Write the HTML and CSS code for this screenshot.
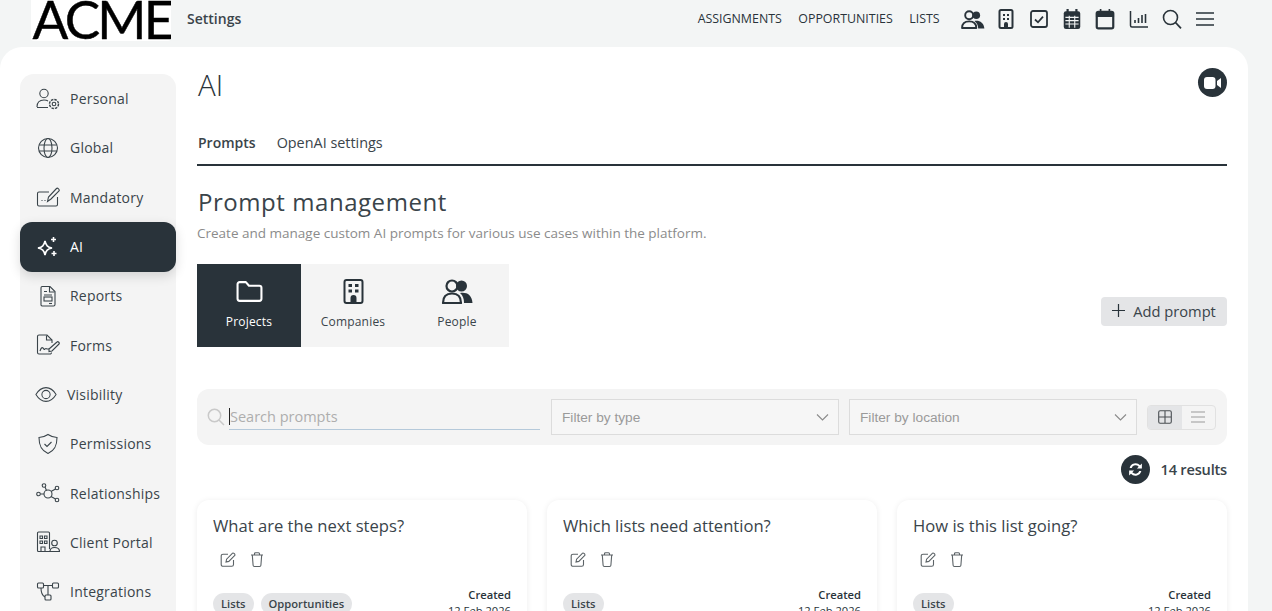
FILE: index.html
```html
<!DOCTYPE html>
<html lang="en">
<head>
<meta charset="utf-8">
<title>AI Settings</title>
<link rel="stylesheet" href="styles.css">
</head>
<body>
<header class="topbar">
  <div class="logo"><span class="logo-text">ACME</span></div>
  <div class="app-title">Settings</div>
  <nav class="topnav">
    <a>ASSIGNMENTS</a><a>OPPORTUNITIES</a><a>LISTS</a>
  </nav>
  <div class="topicons">
    <svg class="ti ti-people" viewBox="0 0 26 20"><circle cx="9.500" cy="5.500" r="4.200" fill="none" stroke="#29333a" stroke-width="2"/><circle cx="17" cy="5.500" r="4" fill="#29333a"/><path d="M2 19c0-5 3-7 7.500-7S17 14 17 19z" fill="none" stroke="#29333a" stroke-width="2" stroke-linejoin="round"/><path d="M15 11.500c5-1 10 1.500 10.500 8H19c0-3.500-1.500-6-4-8z" fill="#29333a"/></svg>
    <svg class="ti ti-narrow" viewBox="0 0 16 20"><rect x="1.500" y="1" width="13" height="18" rx="1.500" fill="none" stroke="#29333a" stroke-width="2"/><path d="M5 5h2v2H5zM9 5h2v2H9zM5 9h2v2H5zM9 9h2v2H9zM6 19v-4a2 2 0 0 1 4 0v4z" fill="#29333a"/></svg>
    <svg class="ti" viewBox="0 0 20 20"><rect x="2" y="2" width="16" height="16" rx="2" fill="none" stroke="#29333a" stroke-width="1.800"/><path d="M6 10.500l3 2.800 5-5.600" fill="none" stroke="#29333a" stroke-width="1.800"/></svg>
    <svg class="ti ti-cal" viewBox="0 0 20 20"><rect x="2.500" y="3" width="15" height="16" rx="2" fill="#29333a"/><path d="M6 1v4M14 1v4" stroke="#29333a" stroke-width="2"/><path d="M4 8.500h12M4 11.500h12M4 14.500h12M7.500 7v11M12.500 7v11" stroke="#f3f5f5" stroke-width="1"/></svg>
    <svg class="ti ti-cal" viewBox="0 0 20 20"><rect x="2.500" y="3.500" width="15" height="15" rx="1.500" fill="none" stroke="#29333a" stroke-width="2"/><path d="M2.500 5h15v2.500h-15zM6 1v3M14 1v3" fill="#29333a" stroke="#29333a" stroke-width="1.500"/></svg>
    <svg class="ti" viewBox="0 0 20 20"><path d="M1.500 2v14.500a1.500 1.500 0 0 0 1.500 1.500h16" fill="none" stroke="#29333a" stroke-width="1.500"/><path d="M6 11v3M9.500 9v5M13 6v8M16.500 5v9" stroke="#29333a" stroke-width="1.600"/></svg>
    <svg class="ti" viewBox="0 0 20 20"><circle cx="8.500" cy="8.500" r="7" fill="none" stroke="#29333a" stroke-width="1.600"/><path d="M13.500 13.500l5.500 5.800" stroke="#29333a" stroke-width="1.800"/></svg>
    <svg class="ti" viewBox="0 0 20 20"><path d="M1 4h18M1 10h18M1 16h18" stroke="#29333a" stroke-width="1.600"/></svg>
  </div>
</header>

<main class="panel">
  <aside class="sidebar">
    <a class="side-item"><svg class="si" viewBox="0 0 24 22"><circle cx="8" cy="5.500" r="4.200"/><path d="M1 19c0-5 3-7 7-7 1.500 0 3 .3 4 1M1 19.500h11"/><circle cx="18" cy="16" r="1.800"/><circle cx="18" cy="16" r="4.500" stroke-dasharray="2.500 1" stroke-width="1.400"/></svg><span>Personal</span></a>
    <a class="side-item"><svg class="si" viewBox="0 0 22 22"><circle cx="11" cy="11" r="9.500"/><ellipse cx="11" cy="11" rx="4" ry="9.500"/><path d="M2 8h18M2 14h18"/></svg><span>Global</span></a>
    <a class="side-item"><svg class="si" viewBox="0 0 24 22"><path d="M13 6H3a1.500 1.500 0 0 0-1.500 1.500v11A1.500 1.500 0 0 0 3 20h17a1.500 1.500 0 0 0 1.500-1.500V11"/><path d="M11.500 15.500l1-4.500 8-8.500c1-1 3.500 1 2.500 2.500l-8 8z"/><path d="M5.500 14.500h1M8.500 14.500h1"/></svg><span>Mandatory</span></a>
    <a class="side-item active"><svg class="si" viewBox="0 0 22 22"><path d="M8 5c1 4.500 2.500 6 7 7-4.500 1-6 2.500-7 7-1-4.500-2.500-6-7-7 4.500-1 6-2.500 7-7z" stroke-width="1.600"/><path d="M16.500 1v5M14 3.500h5M17 15v5M14.500 17.500h5" stroke-width="1.600"/></svg><span>AI</span></a>
    <a class="side-item"><svg class="si" viewBox="0 0 22 22"><path d="M5 1.500h8l5 5v13a1.500 1.500 0 0 1-1.500 1.500h-11A1.500 1.500 0 0 1 4 20V3a1.500 1.500 0 0 1 1-1.500z"/><path d="M12.500 2v5h5M7 6.500h3M7 10h8"/><rect x="7" y="12" width="8" height="4"/><path d="M12 18.500h3"/></svg><span>Reports</span></a>
    <a class="side-item"><svg class="si" viewBox="0 0 24 22"><path d="M16 9V6l-5-5H3a1.500 1.500 0 0 0-1.500 1.500v16A1.500 1.500 0 0 0 3 20h11a1.500 1.500 0 0 0 1.500-1.500"/><path d="M10.500 1.500V6H16M4 17c1-3 2-4 3-3s1 2 2 1 1-1 2 0h2"/><path d="M13 15l8-7c1-1 3 1 2 2l-7 7-3 .500z"/></svg><span>Forms</span></a>
    <a class="side-item item-eye"><svg class="si si-eye" viewBox="0 0 24 18"><path d="M1 9c3-5 7-7.500 11-7.500S20 4 23 9c-3 5-7 7.500-11 7.500S4 14 1 9z"/><circle cx="12" cy="9" r="4.500"/></svg><span>Visibility</span></a>
    <a class="side-item"><svg class="si" viewBox="0 0 22 22"><path d="M11 1.500c3 2 5 3 9 3 0 8-2 13-9 16-7-3-9-8-9-16 4 0 6-1 9-3z"/><path d="M7.500 11l2.500 2.500 4.500-4.500"/></svg><span>Permissions</span></a>
    <a class="side-item"><svg class="si" viewBox="0 0 24 22"><circle cx="12" cy="12" r="4"/><circle cx="8" cy="3.500" r="1.800"/><circle cx="2.500" cy="12" r="1.800"/><circle cx="21" cy="6" r="1.800"/><circle cx="21" cy="18" r="1.800"/><path d="M9 5l1.500 3.500M4.300 12H8M19.500 7l-4.500 2.500M19.500 17L15 14.500"/></svg><span>Relationships</span></a>
    <a class="side-item"><svg class="si" viewBox="0 0 24 22"><path d="M14 20.500H2.500A1 1 0 0 1 1.500 19.500V2A1 1 0 0 1 2.500 1h10A1 1 0 0 1 13.500 2v16"/><path d="M4 5h2.500v2.500H4zM8.500 5H11v2.500H8.500zM4 10h2.500v2.500H4zM8.500 10H11v2.500H8.500zM5 20v-4h4v4"/><circle cx="18.500" cy="12" r="2.800"/><path d="M14 20.500c0-3 1.500-4 4.500-4s5 1 5 4z"/></svg><span>Client Portal</span></a>
    <a class="side-item"><svg class="si" viewBox="0 0 24 22"><rect x="1.500" y="2" width="6" height="5" rx="1"/><rect x="16.500" y="2" width="6" height="5" rx="1"/><rect x="9" y="14" width="6" height="5" rx="1"/><path d="M7.500 4.500h9M5 7c0 5 2 8 4 9M12 4.500V14"/></svg><span>Integrations</span></a>
  </aside>

  <section class="content">
    <div class="title-row">
      <h1>AI</h1>
      <span class="round-btn"><svg viewBox="0 0 18 14" class="video"><rect x="0" y="1" width="11.500" height="12" rx="3" fill="#fff"/><path d="M13 5l4-3v10l-4-3z" fill="#fff"/></svg></span>
    </div>
    <div class="tabs"><a class="tab on">Prompts</a><a class="tab">OpenAI settings</a></div>
    <h2>Prompt management</h2>
    <p class="sub">Create and manage custom AI prompts for various use cases within the platform.</p>

    <div class="type-row">
      <div class="types">
        <div class="type sel"><svg viewBox="0 0 26 22" class="ty"><path d="M1.500 4a2 2 0 0 1 2-2h6l3 3.500h10a2 2 0 0 1 2 2V18a2 2 0 0 1-2 2h-19a2 2 0 0 1-2-2z" fill="none" stroke="#fff" stroke-width="2" stroke-linejoin="round"/></svg><span>Projects</span></div>
        <div class="type"><svg viewBox="0 0 20 25" class="ty"><rect x="1" y="1" width="18" height="23" rx="2" fill="none" stroke="#29333a" stroke-width="2"/><path d="M5 5h3.500v3H5zM11.500 5H15v3h-3.500zM5 10.500h3.500v3H5zM11.500 10.500H15v3h-3.500zM7 24v-5a3 3 0 0 1 6 0v5z" fill="#29333a"/></svg><span>Companies</span></div>
        <div class="type"><svg viewBox="0 0 32 25" class="ty ty-p"><circle cx="11" cy="7" r="5.500" fill="none" stroke="#29333a" stroke-width="2.200"/><circle cx="20.500" cy="7" r="5.500" fill="#29333a"/><path d="M2 24c0-7 3.500-9.500 9-9.500s9 2.500 9 9.500z" fill="none" stroke="#29333a" stroke-width="2.200" stroke-linejoin="round"/><path d="M19 14c7-1 12 2 12.500 10H23c0-4-1-7.500-4-10z" fill="#29333a"/></svg><span>People</span></div>
      </div>
      <button class="add"><svg viewBox="0 0 14 14" class="plus"><path d="M7 0v14M0 7h14" stroke="#29333a" stroke-width="1.300"/></svg>Add prompt</button>
    </div>

    <div class="filters">
      <svg viewBox="0 0 18 18" class="sicon"><circle cx="7.500" cy="7.500" r="6.200" fill="none" stroke="#c9c9c9" stroke-width="1.500"/><path d="M12 12l5 5" stroke="#c9c9c9" stroke-width="1.500"/></svg>
      <div class="search"><span class="caret"></span><span class="ph">Search prompts</span></div>
      <div class="select sel-a"><span>Filter by type</span><svg viewBox="0 0 12 7" class="chev"><path d="M.5.500l5.500 5.500L11.500.500" fill="none" stroke="#8a8a8a" stroke-width="1.100"/></svg></div>
      <div class="select sel-b"><span>Filter by location</span><svg viewBox="0 0 12 7" class="chev"><path d="M.5.500l5.500 5.500L11.500.500" fill="none" stroke="#8a8a8a" stroke-width="1.100"/></svg></div>
      <div class="toggle">
        <span class="tg on"><svg viewBox="0 0 14 14"><rect x=".7" y=".7" width="12.600" height="12.600" rx="1.500" fill="none" stroke="#4a4f53" stroke-width="1.100"/><path d="M7 1v12M1 7h12" stroke="#4a4f53" stroke-width="1.100"/></svg></span>
        <span class="tg"><svg viewBox="0 0 14 12"><path d="M0 1h14M0 6h14M0 11h14" stroke="#9a9a9a" stroke-width="1.100"/></svg></span>
      </div>
    </div>

    <div class="results">
      <span class="refresh"><svg viewBox="0 0 16 16"><path d="M2.500 6.500A5.700 5.700 0 0 1 12.300 4L14 2.300V7H9.300l1.700-1.700A3.900 3.900 0 0 0 4.400 6.500zM13.500 9.500A5.700 5.700 0 0 1 3.700 12L2 13.700V9h4.700L5 10.700a3.900 3.900 0 0 0 6.600-1.200z" fill="#fff"/></svg></span>
      <span class="count">14 results</span>
    </div>

    <div class="cards">
      <article class="card">
        <h3>What are the next steps?</h3>
        <div class="actions"><svg viewBox="0 0 16 16"><path d="M13.500 8.500V13a1.800 1.800 0 0 1-1.800 1.800H3A1.800 1.800 0 0 1 1.200 13V4.500A1.800 1.800 0 0 1 3 2.700h5"/><path d="M6 10.500l.600-2.800 6-6c.8-.8 3 1.400 2.200 2.200l-6 6z"/></svg><svg viewBox="0 0 16 16"><path d="M2 3.500h12M5.500 3.500V2.200a1 1 0 0 1 1-1h3a1 1 0 0 1 1 1v1.300M3.300 3.500l.8 10.300a1.300 1.300 0 0 0 1.300 1.200h5.200a1.300 1.300 0 0 0 1.300-1.200l.8-10.300"/></svg></div>
        <div class="meta"><div class="chips"><span class="chip">Lists</span><span class="chip">Opportunities</span></div><div class="created"><b>Created</b><span>12 Feb 2026</span></div></div>
      </article>
      <article class="card">
        <h3>Which lists need attention?</h3>
        <div class="actions"><svg viewBox="0 0 16 16"><path d="M13.500 8.500V13a1.800 1.800 0 0 1-1.800 1.800H3A1.800 1.800 0 0 1 1.200 13V4.500A1.800 1.800 0 0 1 3 2.700h5"/><path d="M6 10.500l.600-2.800 6-6c.8-.8 3 1.400 2.200 2.200l-6 6z"/></svg><svg viewBox="0 0 16 16"><path d="M2 3.500h12M5.500 3.500V2.200a1 1 0 0 1 1-1h3a1 1 0 0 1 1 1v1.300M3.300 3.500l.8 10.300a1.300 1.300 0 0 0 1.300 1.200h5.200a1.300 1.300 0 0 0 1.300-1.200l.8-10.300"/></svg></div>
        <div class="meta"><div class="chips"><span class="chip">Lists</span></div><div class="created"><b>Created</b><span>12 Feb 2026</span></div></div>
      </article>
      <article class="card">
        <h3>How is this list going?</h3>
        <div class="actions"><svg viewBox="0 0 16 16"><path d="M13.500 8.500V13a1.800 1.800 0 0 1-1.800 1.800H3A1.800 1.800 0 0 1 1.200 13V4.500A1.800 1.800 0 0 1 3 2.700h5"/><path d="M6 10.500l.600-2.800 6-6c.8-.8 3 1.400 2.200 2.200l-6 6z"/></svg><svg viewBox="0 0 16 16"><path d="M2 3.500h12M5.500 3.500V2.200a1 1 0 0 1 1-1h3a1 1 0 0 1 1 1v1.300M3.300 3.500l.8 10.300a1.300 1.300 0 0 0 1.300 1.200h5.200a1.300 1.300 0 0 0 1.300-1.200l.8-10.300"/></svg></div>
        <div class="meta"><div class="chips"><span class="chip">Lists</span></div><div class="created"><b>Created</b><span>12 Feb 2026</span></div></div>
      </article>
    </div>
  </section>
</main>
</body>
</html>
```
FILE: styles.css
```css
* { box-sizing: border-box; }
html, body { margin: 0; height: 100%; overflow: hidden; }
body { background: #f3f5f5; color: #29333a; font-family: "Open Sans", sans-serif; font-size: 14px; }
a { color: inherit; text-decoration: none; }
h1, h2, h3, p { margin: 0; font-weight: 400; }

.topbar { height: 47px; display: flex; align-items: flex-start; padding-left: 31px; padding-right: 50px; }
.logo { width: 140px; height: 41px; background: #fff; overflow: hidden; display: flex; justify-content: center; align-items: flex-start; border-bottom-left-radius: 3px; border-bottom-right-radius: 3px; }
.logo-text { font-family: "Lato", sans-serif; font-size: 53px; line-height: 38px; letter-spacing: -2.800px; color: #000; font-weight: 400; -webkit-text-stroke: .4px #000; margin-left: 2px; }
.app-title { margin-left: 16px; margin-top: 9px; font-size: 14px; line-height: 20px; font-weight: 600; color: #3a444a; }
.topnav { margin-left: auto; margin-top: 10px; display: flex; gap: 16.500px; font-size: 12.400px; line-height: 18px; color: #29333a; }
.topicons { margin-left: 16px; margin-top: 8px; display: grid; grid-template-columns: repeat(8, 33.300px); justify-items: center; align-items: center; height: 22px; }
.ti { width: 20px; height: 20px; display: block; }
.ti-people { width: 25px; height: 19px; }
.ti-narrow { width: 16px; height: 20px; }
.ti-cal { width: 22px; height: 22px; }

.panel { width: 1248px; height: 564px; background: #fff; border-radius: 22px 22px 0 0; display: flex; align-items: flex-start; padding: 27px 21px 0 20px; overflow: hidden; }
.sidebar { width: 156px; flex: none; background: #f4f4f4; border-radius: 14px; display: flex; flex-direction: column; height: 560px; }
.side-item { height: 49.300px; flex: none; display: flex; align-items: center; padding-left: 16px; gap: 10px; color: #3a444a; font-size: 14px; letter-spacing: .22px; }
.side-item.active { height: 50px; margin-bottom: -.7px; background: #29333a; color: #fff; border-radius: 12px; box-shadow: 0 4px 12px rgba(0,0,0,.14); }
.si { width: 24px; height: 22px; flex: none; fill: none; stroke: #3a444a; stroke-width: 1.100; }
.active .si { stroke: #fff; }
.item-eye { gap: 10px; padding-left: 15px; }
.si-eye { width: 22px; height: 17px; }

.content { margin-left: 21px; width: 1030px; flex: none; }
.title-row { display: flex; justify-content: space-between; height: 42px; }
h1 { font-size: 29.500px; line-height: 22px; font-weight: 300; color: #29333a; margin-left: 1px; }
.round-btn { width: 29px; height: 29px; border-radius: 50%; background: #29333a; display: flex; align-items: center; justify-content: center; margin-top: -6px; }
.video { width: 18px; height: 14px; }
.tabs { display: flex; gap: 21px; height: 50px; padding-top: 16px; border-bottom: 2px solid #29333a; line-height: 22px; }
.tab { color: #3a444a; font-size: 14.400px; }
.tab.on { font-weight: 600; margin-left: 1px; font-size: 14px; }
h2 { font-size: 24px; line-height: 32px; margin-top: 20px; letter-spacing: .55px; color: #3a444a; margin-left: 1px; }
.sub { font-size: 13.500px; line-height: 18px; margin-top: 6px; color: #8b8b8b; }

.type-row { display: flex; justify-content: space-between; align-items: flex-end; margin-top: 22px; height: 83px; }
.types { display: flex; background: #f4f4f4; height: 83px; }
.type { width: 104px; display: flex; flex-direction: column; align-items: center; font-size: 12px; color: #3a444a; padding-top: 15px; letter-spacing: .2px; }
.type span { margin-top: 10px; line-height: 16px; }
.type.sel { background: #29333a; color: #fff; }
.ty { height: 25px; width: 27px; display: block; }
.ty-p { width: 32px; }
.add { align-self: flex-end; margin-bottom: 21px; height: 29px; width: 126px; border: 0; border-radius: 4px; background: #e4e5e7; color: #3a444a; font-family: inherit; font-size: 14.700px; line-height: 20px; display: flex; align-items: center; justify-content: center; gap: 8px; padding: 0 0 2px; }
.plus { width: 13px; height: 13px; }

.filters { margin-top: 42px; height: 56px; background: #f4f4f4; border-radius: 12px; display: flex; align-items: center; padding: 0 11px 0 10px; }
.sicon { width: 18px; height: 18px; flex: none; margin-right: 4px; }
.search { width: 311px; height: 26px; border-bottom: 1px solid #b5c9da; display: flex; align-items: center; flex: none; }
.caret { width: 1px; height: 17px; background: #222; flex: none; }
.ph { color: #aeaeae; font-size: 14.500px; line-height: 20px; }
.select { height: 36px; background: #f6f6f6; border: 1px solid #dcdcdc; display: flex; align-items: center; justify-content: space-between; padding: 0 9px 0 10px; color: #9a9a9a; font-family: "Liberation Sans", sans-serif; font-size: 13.700px; flex: none; }
.sel-a { width: 288px; margin-left: 11px; }
.sel-b { width: 288px; margin-left: 10px; }
.chev { width: 13px; height: 7px; }
.toggle { margin-left: 10px; width: 69px; height: 25px; border: 1px solid #e1e1e1; border-radius: 4px; display: flex; overflow: hidden; flex: none; }
.tg { flex: 1; display: flex; align-items: center; justify-content: center; }
.tg.on { background: #e4e5e7; }
.tg svg { width: 14px; height: 14px; }

.results { display: flex; justify-content: flex-end; align-items: center; gap: 10px; height: 40px; margin-top: 5px; padding-bottom: 2px; }
.refresh { width: 29px; height: 29px; border-radius: 50%; background: #29333a; display: flex; align-items: center; justify-content: center; }
.refresh svg { width: 17px; height: 17px; }
.count { font-size: 14.600px; font-weight: 600; color: #3a444a; letter-spacing: -.2px; }

.cards { display: grid; grid-template-columns: repeat(3, 330px); gap: 20px; margin-top: 10px; }
.card { height: 160px; background: #fff; border-radius: 12px; box-shadow: 0 1px 6px rgba(0,0,0,.08); padding: 14px 16px; }
h3 { font-size: 16.600px; line-height: 24px; color: #3a444a; }
.actions { display: flex; gap: 13px; margin-top: 13px; padding-left: 7px; height: 18px; }
.actions svg { width: 16px; height: 17px; fill: none; stroke: #5c6367; stroke-width: 1.100; }
.meta { display: flex; justify-content: space-between; margin-top: 18px; }
.chips { display: flex; gap: 7px; padding-top: 6px; }
.chip { height: 22px; padding: 0 8px; border-radius: 11px; background: #e4e5e7; font-size: 11.200px; font-weight: 600; line-height: 22px; color: #3a444a; }
.created { display: flex; flex-direction: column; align-items: flex-end; font-size: 11.200px; line-height: 16px; }
.created b { font-weight: 600; color: #29333a; }
```
